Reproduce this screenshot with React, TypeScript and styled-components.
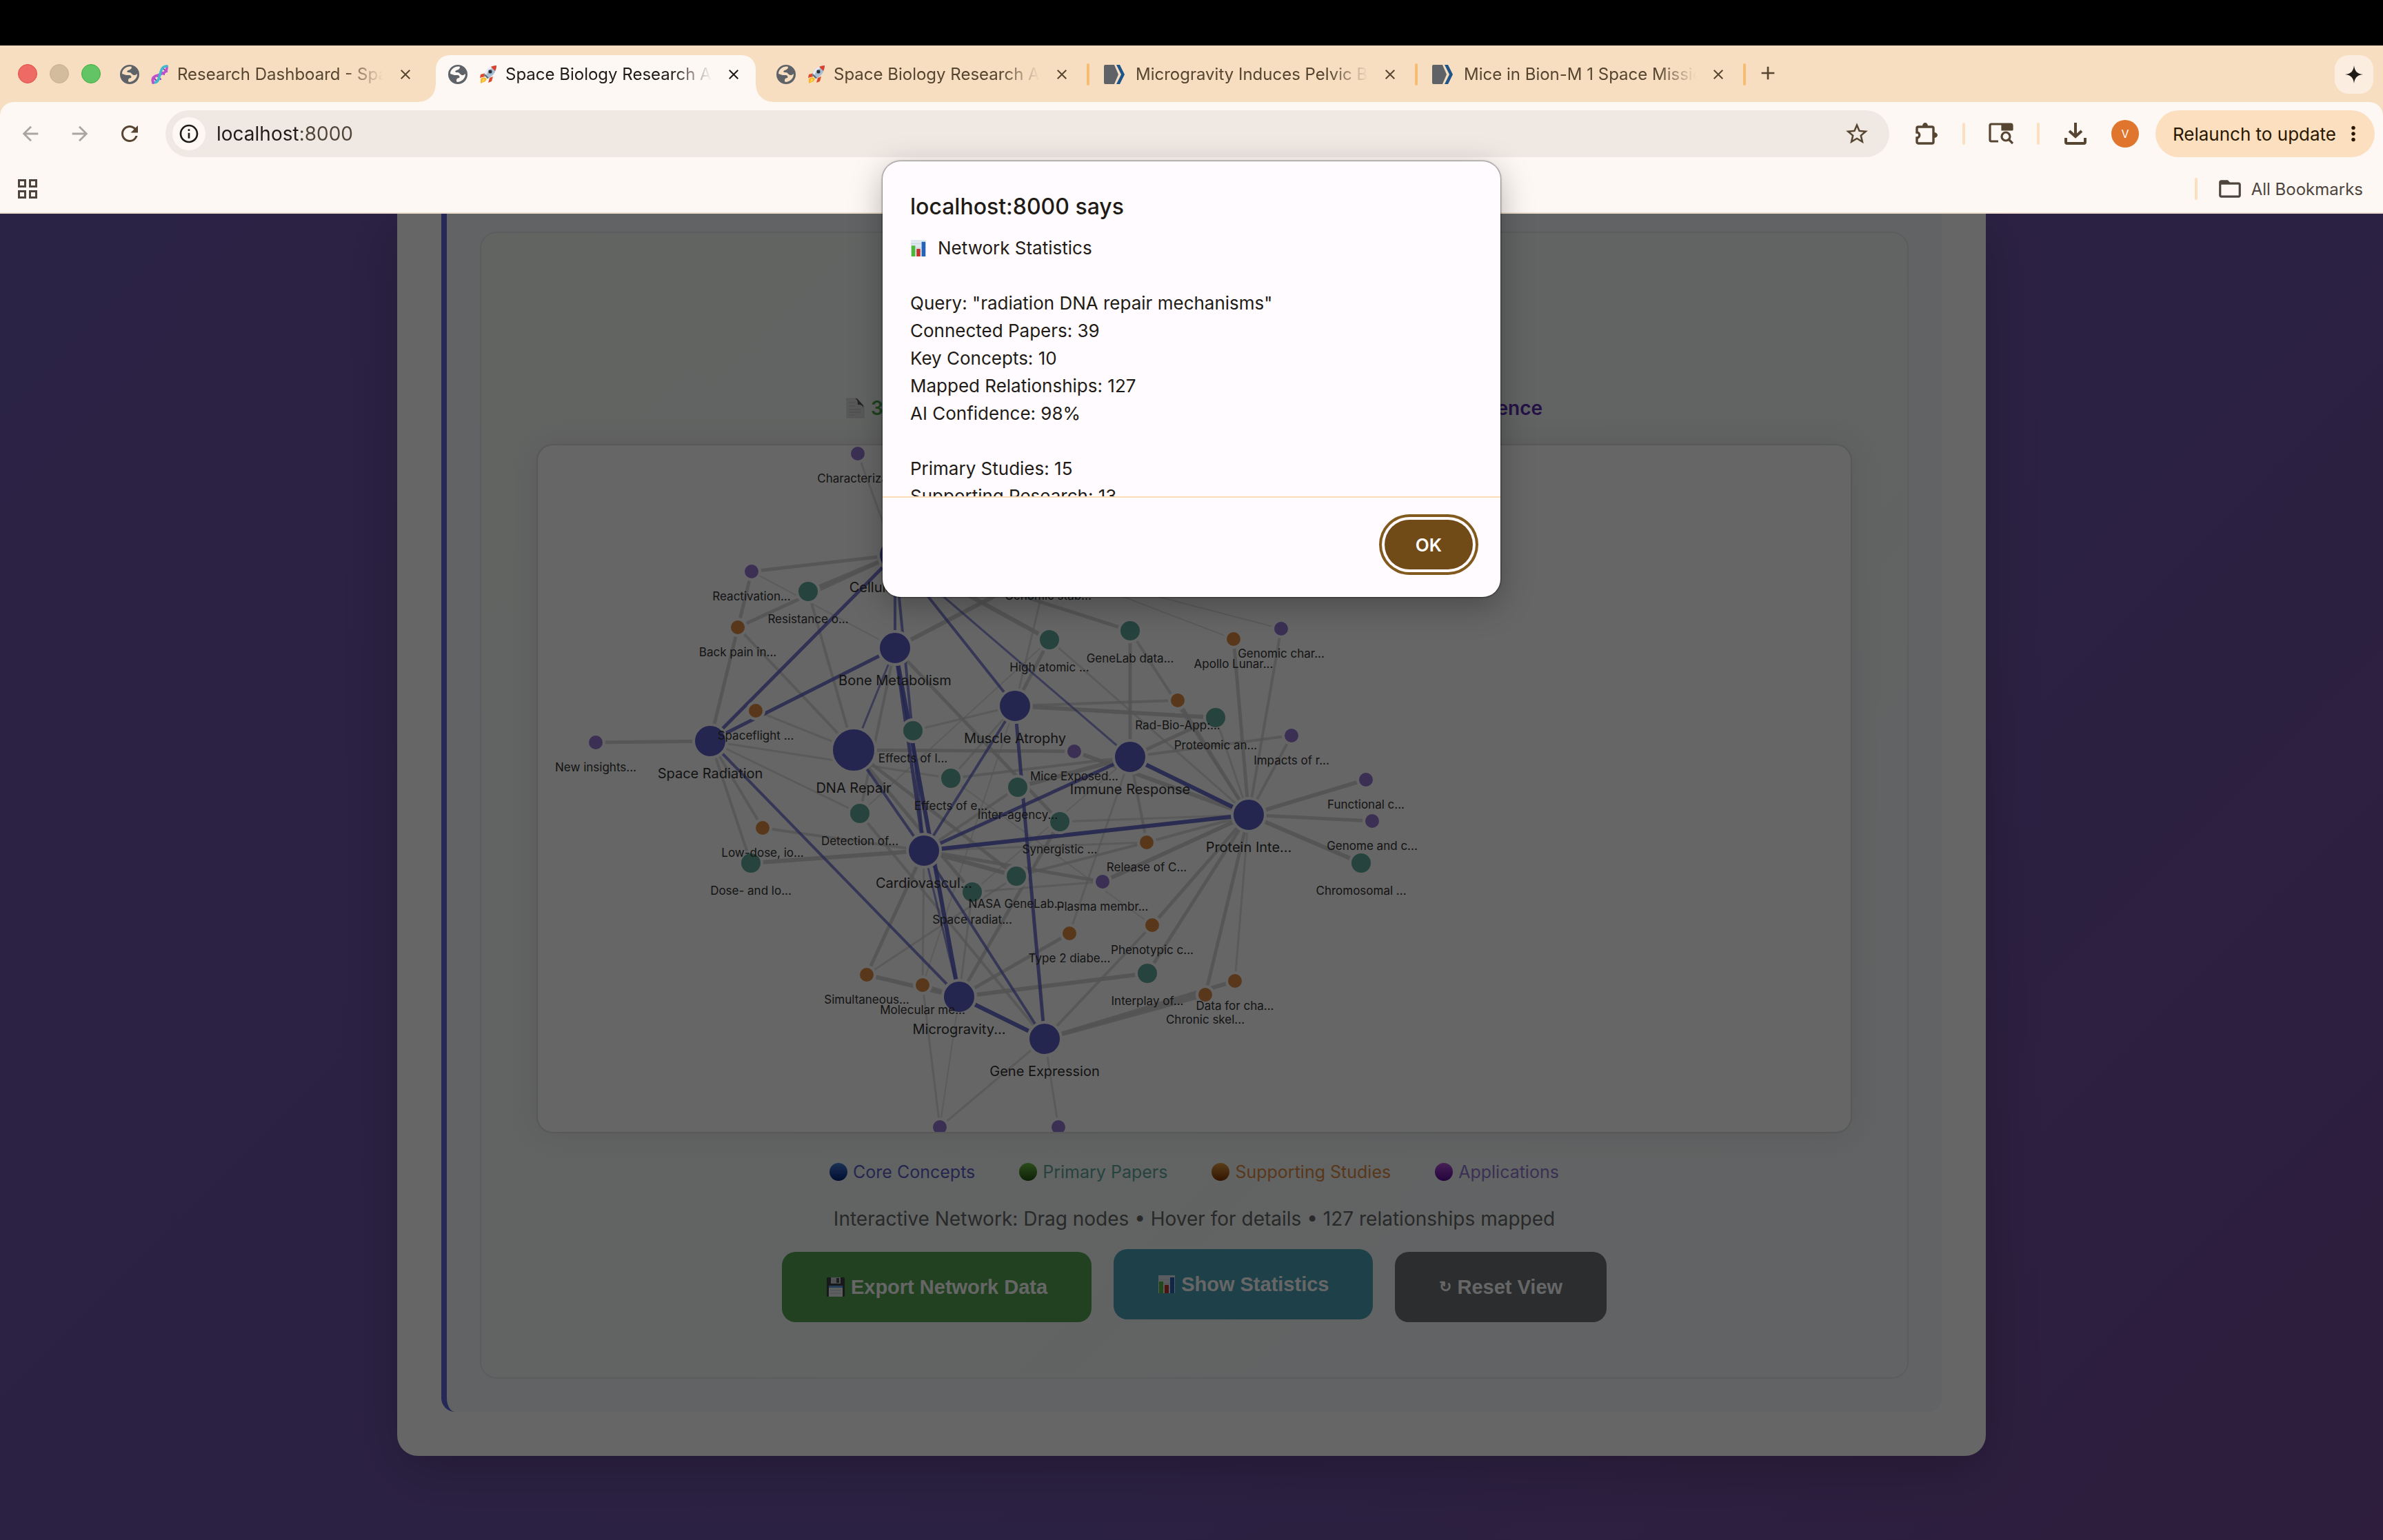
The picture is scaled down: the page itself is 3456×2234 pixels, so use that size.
import React from "react";
import styled, { createGlobalStyle } from "styled-components";
import {
  MdAdd,
  MdArrowBack,
  MdArrowForward,
  MdClose,
  MdFolderOpen,
  MdInfoOutline,
  MdMoreVert,
  MdRefresh,
  MdStarOutline,
} from "react-icons/md";

const UI = `Inter, "Liberation Sans", sans-serif`;

const GlobalStyle = createGlobalStyle`
  *, *::before, *::after { box-sizing: border-box; }
  body { margin: 0; background: #000; font-family: ${UI}; }
  button, input { font: inherit; }
  button { border: 0; padding: 0; background: none; color: inherit; cursor: pointer; }
  h1, h2, h3, p { margin: 0; }
  svg { display: block; flex: none; }
`;

/* ---------- browser frame ---------- */

const Screen = styled.div`
  position: relative;
  display: flex;
  flex-direction: column;
  height: 100vh;
  padding-top: 66px;
  overflow: hidden;
`;

const TabStrip = styled.header`
  display: flex;
  align-items: flex-end;
  flex: none;
  height: 82px;
  padding: 0 14px 0 26px;
  background: #f7dec0;
`;

const Lights = styled.div`
  display: flex;
  gap: 18px;
  width: 130px;
  padding-bottom: 27px;
`;

const Light = styled.button<{ $fill: string; $edge: string }>`
  width: 28px;
  height: 28px;
  border-radius: 50%;
  background: ${(p) => p.$fill};
  border: 1px solid ${(p) => p.$edge};
`;

const Tabs = styled.nav`
  display: flex;
  flex: 1;
  min-width: 0;
`;

const Tab = styled.div<{ $active?: boolean }>`
  position: relative;
  display: flex;
  align-items: center;
  width: 464px;
  height: 68px;
  padding: 0 20px 12px 17px;
  border-radius: 20px 20px 0 0;
  color: ${(p) => (p.$active ? "#1f1b16" : "#564531")};
  background: ${(p) => (p.$active ? "#fef8f4" : "transparent")};

  &::before,
  &::after {
    content: "";
    display: ${(p) => (p.$active ? "block" : "none")};
    position: absolute;
    bottom: 0;
    width: 24px;
    height: 24px;
  }
  &::before {
    right: 100%;
    background: radial-gradient(circle at 0 0, transparent 23px, #fef8f4 24px);
  }
  &::after {
    left: 100%;
    background: radial-gradient(circle at 100% 0, transparent 23px, #fef8f4 24px);
  }
`;

const TabTitle = styled.a`
  display: flex;
  align-items: center;
  gap: 12px;
  flex: 1;
  min-width: 0;
  margin: 0 20px 0 16px;
  overflow: hidden;
  color: inherit;
  font-size: 24px;
  line-height: 32px;
  text-decoration: none;
  white-space: nowrap;
  mask-image: linear-gradient(90deg, #000 calc(100% - 56px), transparent);
`;

const CloseButton = styled.button`
  display: grid;
  place-items: center;
  width: 24px;
  height: 24px;
`;

const Divider = styled.span<{ $color: string; $space?: number }>`
  flex: none;
  width: 4px;
  height: 32px;
  margin: 0 ${(p) => p.$space ?? 4}px;
  border-radius: 2px;
  background: ${(p) => p.$color};
`;

const TabGap = styled.div`
  display: flex;
  padding-top: 12px;
  width: 12px;
`;

const NewTab = styled.button`
  display: grid;
  place-items: center;
  width: 40px;
  height: 40px;
  margin: 6px 0 0 8px;
  color: #564531;
`;

const SparkButton = styled.button`
  display: grid;
  place-items: center;
  width: 56px;
  height: 56px;
  margin-bottom: 12px;
  border-radius: 20px;
  background: #fbeee1;
`;

const Chrome = styled.div`
  flex: none;
  background: #f7dec0;
`;

const ChromeBody = styled.div`
  border-radius: 20px 20px 0 0;
  border-bottom: 2px solid #eee0d0;
  background: #fef8f4;
`;

const Toolbar = styled.div`
  display: flex;
  align-items: center;
  height: 92px;
  padding: 0 12px 0 24px;
  color: #564531;
`;

const NavButtons = styled.div`
  display: flex;
  gap: 32px;
  width: 216px;
`;

const IconButton = styled.button<{ $muted?: boolean }>`
  display: grid;
  place-items: center;
  width: 40px;
  height: 40px;
  color: ${(p) => (p.$muted ? "#aaa5a0" : "inherit")};
`;

const AddressBar = styled.label`
  display: flex;
  align-items: center;
  flex: 1;
  height: 68px;
  padding: 0 28px 0 10px;
  border-radius: 34px;
  background: #f0e8e3;
`;

const SiteInfo = styled.span`
  display: grid;
  place-items: center;
  width: 48px;
  height: 48px;
  border-radius: 50%;
  color: #1f1b16;
  background: #fef8f4;
`;

const Address = styled.input`
  flex: 1;
  min-width: 0;
  height: 40px;
  margin-left: 16px;
  padding: 0;
  border: 0;
  outline: 0;
  color: #1f1b16;
  font-size: 28px;
  background: linear-gradient(90deg, #1f1b16 118px, #51453a 118px);
  background-clip: text;
  -webkit-text-fill-color: transparent;
`;

const Actions = styled.div`
  display: flex;
  align-items: center;
  padding-left: 34px;
`;

const Avatar = styled.button`
  width: 40px;
  height: 40px;
  margin: 0 24px 0 32px;
  border-radius: 50%;
  background: #e0752d;
  color: #fff;
  font-size: 16px;
  line-height: 40px;
`;

const Relaunch = styled.button`
  display: flex;
  align-items: center;
  gap: 8px;
  height: 68px;
  padding: 0 14px 0 25px;
  border-radius: 34px;
  background: #fbdfbf;
  color: #291800;
  font-size: 26px;
  white-space: nowrap;
`;

const BookmarkBar = styled.div`
  display: flex;
  align-items: center;
  justify-content: space-between;
  height: 68px;
  padding: 0 29px 0 26px;
  color: #4d453d;
`;

const AllBookmarks = styled.button`
  display: flex;
  align-items: center;
  gap: 12px;
  font-size: 24px;
`;

/* ---------- page ---------- */

const Page = styled.main`
  position: relative;
  flex: 1;
  padding: 0 64px;
  overflow: hidden;
  background: linear-gradient(135deg, #6d57ac, #6d53a6 65%, #744a99);
`;

const Backdrop = styled.div`
  position: absolute;
  inset: 0;
  background: rgba(0, 0, 0, 0.6);
`;

const Sheet = styled.div`
  max-width: 2304px;
  margin: 0 auto;
  padding: 0 64px 64px;
  border-radius: 0 0 30px 30px;
  background: #fff;
  box-shadow: 0 20px 80px rgba(0, 0, 0, 0.2);
`;

const Result = styled.section`
  padding: 26px 48px 48px;
  border-left: 8px solid #6065d8;
  border-radius: 0 0 20px 20px;
  background: #f5f7fd;
`;

const Panel = styled.div`
  padding: 80px;
  border: 2px solid #e2e7ea;
  border-radius: 24px;
  background: linear-gradient(135deg, #f5faf6, #f3f8fa);
  text-align: center;
`;

const QueryLine = styled.h2`
  margin-top: 80px;
  color: #5b5fc7;
  font-size: 36px;
  font-weight: 700;
  line-height: 40px;
`;

const Facts = styled.div`
  display: flex;
  justify-content: space-between;
  max-width: 1010px;
  margin: 34px auto 32px;
  font-size: 28px;
  font-weight: 600;
  line-height: 40px;
`;

const Fact = styled.span<{ $color: string }>`
  display: flex;
  align-items: center;
  gap: 8px;
  color: ${(p) => p.$color};
`;

const GraphBox = styled.figure`
  height: 1000px;
  margin: 0;
  overflow: hidden;
  border: 2px solid #dcdcdc;
  border-radius: 24px;
  background: #fff;
  box-shadow: 0 0 40px rgba(90, 40, 60, 0.12);
`;

const GraphSvg = styled.svg`
  width: 100%;
  height: 100%;
  font-family: ${UI};
`;

const Legend = styled.ul`
  display: flex;
  justify-content: center;
  gap: 64px;
  margin: 36px 0 0;
  padding: 0;
  list-style: none;
  font-size: 25px;
  line-height: 40px;
`;

const LegendItem = styled.li<{ $color: string }>`
  display: flex;
  align-items: center;
  gap: 8px;
  color: ${(p) => p.$color};
`;

const Ball = styled.span<{ $top: string; $bottom: string }>`
  width: 26px;
  height: 26px;
  border-radius: 50%;
  background: linear-gradient(${(p) => p.$top}, ${(p) => p.$bottom});
`;

const Note = styled.p`
  margin-top: 28px;
  color: #666;
  font-size: 28px;
  line-height: 40px;
`;

const ButtonRow = styled.div`
  display: flex;
  justify-content: center;
  gap: 32px;
  margin-top: 28px;
`;

const ActionButton = styled.button<{ $fill: string; $raised?: boolean }>`
  display: flex;
  align-items: center;
  gap: 8px;
  height: 102px;
  padding: 0 64px;
  border-radius: 20px;
  background: ${(p) => p.$fill};
  color: #fff;
  font-family: "Liberation Sans", Arial, sans-serif;
  font-size: 29px;
  font-weight: 700;
  transform: translateY(${(p) => (p.$raised ? -4 : 0)}px);
`;

const Turn = styled.span`
  font-size: 22px;
`;

/* ---------- alert ---------- */

const Alert = styled.div`
  position: absolute;
  top: 234px;
  left: 50%;
  width: 896px;
  transform: translateX(-50%);
  overflow: hidden;
  border-radius: 26px;
  background: #fffbff;
  box-shadow: 0 0 2px 1px rgba(0, 0, 0, 0.45), 0 12px 48px rgba(0, 0, 0, 0.28);
  color: #1f1b16;
`;

const AlertTitle = styled.h1`
  padding: 46px 40px 0;
  font-size: 32px;
  font-weight: 500;
  line-height: 40px;
`;

const AlertBody = styled.div`
  height: 402px;
  padding: 20px 40px 0;
  overflow: hidden;
  border-bottom: 2px solid #fadcb9;
  font-size: 26px;
  line-height: 40px;
`;

const AlertLine = styled.p`
  display: flex;
  align-items: center;
  gap: 16px;
  min-height: 40px;
`;

const AlertFooter = styled.div`
  display: flex;
  justify-content: flex-end;
  padding: 32px 40px 40px;
`;

const OkButton = styled.button`
  width: 128px;
  height: 72px;
  border-radius: 36px;
  background: #704b18;
  box-shadow: 0 0 0 4px #fffbff, 0 0 0 8px #835a1e;
  color: #fff;
  font-size: 26px;
  font-weight: 600;
`;

/* ---------- pictograms ---------- */

const Globe = () => (
  <svg width="28" height="28" viewBox="0 0 28 28">
    <path
      fill="#5f6368"
      fillRule="evenodd"
      d="M14 0a14 14 0 1 1 0 28 14 14 0 0 1 0-28zM3 13c2 1 4 1 6 2h4c3 0 4 2 3 4-2 0-4 1-4 3s0 3 2 3c6-1 11-5 11-12-2 2-5 3-7 1s-2-3-5-3-4-2-1-3 5-2 5-5c-6-2-14 3-14 10z"
    />
  </svg>
);

const Dna = () => (
  <svg width="26" height="28" viewBox="0 0 26 28" fill="none" strokeLinecap="round">
    <path d="M4 19l5 5M8 15l6 6M14 9l5 5M17 5l6 5" stroke="#7a3fb8" strokeWidth="2" />
    <path d="M3 26C1 16 8 16 13 14S24 11 23 2" stroke="#c04fd0" strokeWidth="3.600" />
    <path d="M3 26c8 0 8-5 10-12S16 2 23 2" stroke="#3fb9cf" strokeWidth="3.600" />
    <path d="M3 26C1 20 3 18 7 16" stroke="#c04fd0" strokeWidth="3.600" />
  </svg>
);

const Rocket = () => (
  <svg width="26" height="28" viewBox="0 0 26 28">
    <path d="M7 18l-5 2 0 7 7-3 2-4z" fill="#f8b72c" />
    <path d="M6 20l-2 5 4-3z" fill="#fbe36a" />
    <path d="M9 12l-7 2-1 5 7-2zM15 19l-2 7 5-2 2-7z" fill="#e0492c" />
    <path d="M25 1C16 1 10 6 7 15l5 5c8-3 13-10 13-19z" fill="#a9c0d4" />
    <path d="M25 1C16 1 10 6 7 15l2 2C12 9 18 4 25 1z" fill="#e9eff4" />
    <path d="M25 1c-4 0-6 1-8 2l6 6c1-2 2-5 2-8z" fill="#d8402c" />
    <path d="M7 15l5 5 2-1-6-6z" fill="#5d6c79" />
    <circle cx="16" cy="10" r="3" fill="#2b2f38" stroke="#8fa3b4" />
  </svg>
);

const BarChart = ({ size = 26 }: { size?: number }) => (
  <svg width={size} height={size} viewBox="0 0 26 26">
    <rect x="1" y="0" width="24" height="26" fill="#dfe8ee" />
    <path d="M1 6h24M1 12h24M1 18h24" stroke="#c5d2db" />
    <rect x="2" y="9" width="6" height="17" fill="#4fb63c" />
    <rect x="10" y="14" width="6" height="12" fill="#c3312a" />
    <rect x="18" y="3" width="6" height="23" fill="#2463b8" />
  </svg>
);

const Sheetlet = () => (
  <svg width="28" height="32" viewBox="0 0 28 32">
    <path d="M1 2h14l11 11v17H1z" fill="#dedede" stroke="#d0d0d0" />
    <path d="M4 8h8M4 13h9M4 18h18M4 22h18M4 26h8" stroke="#bdbdbd" />
    <path d="M13 2c4 1 4 6 4 9 3 0 7 0 8 5V12L16 2z" fill="#5a5a5a" />
  </svg>
);

const Floppy = () => (
  <svg width="28" height="30" viewBox="0 0 28 30">
    <path d="M2 1h24l1 1v26l-1 1H2l-1-1V2z" fill="#3c3f45" />
    <rect x="7" y="1" width="14" height="9" fill="#c9ccd0" />
    <rect x="15" y="2" width="4" height="7" fill="#4b4f55" />
    <rect x="4" y="13" width="20" height="16" fill="#e8edf2" />
    <rect x="4" y="13" width="20" height="3" fill="#5b9bd8" />
    <path d="M6 20h16M6 24h16" stroke="#c2c9d0" />
  </svg>
);

const JournalMark = () => (
  <svg width="30" height="28" viewBox="0 0 30 28">
    <path d="M2 0h13l6 14-6 14H2a2 2 0 0 1-2-2V2a2 2 0 0 1 2-2z" fill="#5f6368" />
    <path d="M18 0h5l7 14-7 14h-5l7-14z" fill="#20558a" />
  </svg>
);

const Spark = () => (
  <svg width="28" height="28" viewBox="0 0 28 28">
    <path d="M14 1c1 8 4 12 13 13-9 1-12 5-13 13-1-8-4-12-13-13 9-1 12-5 13-13z" fill="#1f1b16" />
  </svg>
);

const Puzzle = () => (
  <svg width="32" height="32" viewBox="0 0 32 32">
    <path
      d="M2 14V8a2 2 0 0 1 2-2h20a2 2 0 0 1 2 2v20a2 2 0 0 1-2 2H4a2 2 0 0 1-2-2v-6c5 0 5-8 0-8z"
      fill="none"
      stroke="currentColor"
      strokeWidth="3.400"
    />
    <path d="M10 5a4 5 0 0 1 8 0zM27 14a5 4 0 0 1 0 8z" fill="currentColor" />
  </svg>
);

const TabSearch = () => (
  <svg width="36" height="32" viewBox="0 0 36 32" fill="none" stroke="currentColor" strokeWidth="3.200">
    <path d="M14 27H4a2 2 0 0 1-2-2V4a2 2 0 0 1 2-2h28a2 2 0 0 1 2 2v7" />
    <path d="M20 3h13v7H20z" fill="currentColor" />
    <circle cx="25" cy="20" r="6" />
    <path d="M29 24l6 6" />
  </svg>
);

const Download = () => (
  <svg width="32" height="32" viewBox="0 0 32 32" fill="none" stroke="currentColor" strokeWidth="4">
    <path d="M16 0v20" />
    <path d="M7 12l9 8 9-8" />
    <path d="M2 22v6a2 2 0 0 0 2 2h24a2 2 0 0 0 2-2v-6" />
  </svg>
);

const Grid = () => (
  <svg width="28" height="28" viewBox="0 0 28 28" fill="none" stroke="currentColor" strokeWidth="3">
    <path d="M1.500 1.500h9v9h-9zM17.500 1.500h9v9h-9zM1.500 17.500h9v9h-9zM17.500 17.500h9v9h-9z" />
  </svg>
);

/* ---------- network data ---------- */

type Kind = "core" | "primary" | "support" | "application";
type NetNode = { id: string; kind: Kind; x: number; y: number; label: string; r?: number };

const n = (id: string, kind: Kind, x: number, y: number, label: string, r?: number): NetNode => ({ id, kind, x, y, label, r });

const nodes: NetNode[] = [
  n("A1", "application", 1244, 657, "Characteriza..."),
  n("A2", "application", 1090, 828, "Reactivation..."),
  n("A3", "application", 864, 1076, "New insights..."),
  n("A4", "application", 1558, 1089, "Mice Exposed..."),
  n("A5", "application", 1858, 911, "Genomic char..."),
  n("A6", "application", 1873, 1066, "Impacts of r..."),
  n("A7", "application", 1981, 1130, "Functional c..."),
  n("A8", "application", 1990, 1190, "Genome and c..."),
  n("A9", "application", 1599, 1278, "Plasma membr..."),
  n("A10", "application", 1363, 1634, ""),
  n("A11", "application", 1535, 1634, ""),
  n("S1", "support", 1070, 909, "Back pain in..."),
  n("S2", "support", 1096, 1030, "Spaceflight ..."),
  n("S3", "support", 1106, 1200, "Low-dose, io..."),
  n("S4", "support", 1789, 926, "Apollo Lunar..."),
  n("S5", "support", 1708, 1015, "Rad-Bio-App:..."),
  n("S6", "support", 1663, 1221, "Release of C..."),
  n("S7", "support", 1671, 1341, "Phenotypic c..."),
  n("S8", "support", 1551, 1353, "Type 2 diabe..."),
  n("S9", "support", 1257, 1413, "Simultaneous..."),
  n("S10", "support", 1338, 1428, "Molecular me..."),
  n("S11", "support", 1791, 1422, "Data for cha..."),
  n("S12", "support", 1748, 1442, "Chronic skel..."),
  n("P1", "primary", 1172, 857, "Resistance o..."),
  n("P2", "primary", 1522, 927, "High atomic ..."),
  n("P3", "primary", 1639, 914, "GeneLab data..."),
  n("P4", "primary", 1763, 1040, "Proteomic an..."),
  n("P5", "primary", 1324, 1059, "Effects of l..."),
  n("P6", "primary", 1379, 1128, "Effects of e..."),
  n("P7", "primary", 1476, 1141, "Inter-agency..."),
  n("P8", "primary", 1247, 1179, "Detection of..."),
  n("P9", "primary", 1089, 1251, "Dose- and lo..."),
  n("P10", "primary", 1537, 1191, "Synergistic ..."),
  n("P11", "primary", 1474, 1270, "NASA GeneLab..."),
  n("P12", "primary", 1410, 1293, "Space radiat..."),
  n("P13", "primary", 1664, 1411, "Interplay of..."),
  n("P14", "primary", 1974, 1251, "Chromosomal ..."),
  n("P15", "primary", 1520, 823, "Genomic stab..."),
  n("C1", "core", 1030, 1074, "Space Radiation"),
  n("C2", "core", 1238, 1087, "DNA Repair", 32),
  n("C3", "core", 1298, 939, "Bone Metabolism"),
  n("C4", "core", 1298, 804, "Cellular Stre..."),
  n("C5", "core", 1472, 1023, "Muscle Atrophy"),
  n("C6", "core", 1639, 1097, "Immune Response"),
  n("C7", "core", 1811, 1181, "Protein Inte..."),
  n("C8", "core", 1340, 1233, "Cardiovascul..."),
  n("C9", "core", 1391, 1445, "Microgravity..."),
  n("C10", "core", 1515, 1506, "Gene Expression"),
];

const kinds: Record<Kind, { r: number; fill: string; drop: number; size: number }> = {
  core: { r: 24, fill: "#5c5fc8", drop: 30, size: 20 },
  primary: { r: 16, fill: "#5fa89c", drop: 30, size: 17 },
  support: { r: 12, fill: "#de8a41", drop: 30, size: 17 },
  application: { r: 12, fill: "#9478d2", drop: 30, size: 17 },
};

/* "from-to:weight" */
const conceptLinks =
  "C4-C1:5 C4-C3:4 C4-C8:4 C4-C5:4 C4-C6:3 C1-C3:5 C1-C9:4 C3-C2:3 C3-C8:5 C3-C9:6 C2-C8:4 C5-C8:4 C5-C10:5 C6-C8:5 C6-C7:6 C7-C8:6 C8-C9:3 C8-C10:4 C9-C10:6";

const paperLinks =
  "A1-C4:3 A2-C4:5 A2-C1:5 S1-C4:5 P1-C4:6 A2-C3:2 P1-C2:4 S1-C2:4 A3-C1:5 S2-C2:3 P6-C1:3 P8-C1:3 S3-C1:4 P9-C1:4 S3-C8:4 P9-C8:6 " +
  "A4-C2:5 A4-C7:6 P8-C3:4 P10-C3:5 P15-C3:6 P15-C5:3 P2-C4:6 P3-C4:5 P8-P2:2 P2-C7:3 P2-C5:5 P3-C6:5 P3-C7:4 S5-C7:5 S5-C5:4 P4-C5:6 " +
  "P4-C6:5 P4-C7:3 S4-C7:5 A5-C7:4 A6-C6:4 A6-C7:4 A7-C7:6 A8-C7:5 P14-C7:6 P7-C6:6 P6-C6:4 P5-C5:3 P6-C5:3 S10-C5:2 P12-C6:2 S8-C6:3 " +
  "S6-C6:4 P10-C7:3 P10-C9:5 P7-C8:4 S6-C7:4 S6-C8:3 S6-P11:4 P11-S9:3 A9-C7:6 A9-C8:5 S7-P6:2 A9-P12:3 P11-C8:6 P11-C2:5 P12-C2:5 " +
  "P8-C10:4 S9-C8:5 S10-C8:3 P12-C9:3 S8-C9:5 P13-C9:6 S9-C9:6 S10-C9:5 S10-A10:3 C9-A10:2 C10-A10:3 C10-A11:3 S7-C10:4 S7-C7:5 " +
  "P13-C7:5 S11-C10:6 S12-C10:6 S12-C7:5 S11-C7:3 S4-P15:2 A5-P15:2";

const byId = new Map(nodes.map((node) => [node.id, node]));

const parseLinks = (source: string) =>
  source.split(" ").map((entry) => {
    const [pair, weight] = entry.split(":");
    const [from, to] = pair.split("-");
    return { key: pair, a: byId.get(from)!, b: byId.get(to)!, weight: Number(weight) };
  });

const Links = ({ source, color }: { source: string; color: string }) => (
  <g stroke={color}>
    {parseLinks(source).map(({ key, a, b, weight }) => (
      <line key={key} x1={a.x} y1={a.y} x2={b.x} y2={b.y} strokeWidth={weight} strokeOpacity={0.4 + weight / 12} />
    ))}
  </g>
);

const Network = () => (
  <GraphSvg viewBox="780 645 1904 996" role="img" aria-label="Knowledge network">
    <Links source={paperLinks} color="#cfcfcf" />
    <Links source={conceptLinks} color="#5c5fc8" />
    <g stroke="#fff" strokeWidth="4">
      {nodes.map((node) => (
        <circle key={node.id} cx={node.x} cy={node.y} r={node.r ?? kinds[node.kind].r} fill={kinds[node.kind].fill} />
      ))}
    </g>
    <g fill="#333" textAnchor="middle">
      {nodes.map((node) => (
        <text
          key={node.id}
          x={node.x}
          y={node.y + (node.r ?? kinds[node.kind].r) + kinds[node.kind].drop}
          fontSize={kinds[node.kind].size}
        >
          {node.label}
        </text>
      ))}
    </g>
  </GraphSvg>
);

/* ---------- content ---------- */

const tabs = [
  { icon: "globe", emoji: <Dna />, title: "Research Dashboard - Space Biology" },
  { icon: "globe", emoji: <Rocket />, title: "Space Biology Research Assistant", active: true },
  { icon: "globe", emoji: <Rocket />, title: "Space Biology Research Assistant" },
  { icon: "journal", title: "Microgravity Induces Pelvic Bone Loss" },
  { icon: "journal", title: "Mice in Bion-M 1 Space Mission" },
];

const Favicon = styled.span`
  display: grid;
  place-items: center;
  flex: none;
  width: 30px;
  height: 30px;
`;

const statistics = [
  "",
  'Query: "radiation DNA repair mechanisms"',
  "Connected Papers: 39",
  "Key Concepts: 10",
  "Mapped Relationships: 127",
  "AI Confidence: 98%",
  "",
  "Primary Studies: 15",
  "Supporting Research: 13",
];

export default function App() {
  return (
    <Screen>
      <GlobalStyle />
      <TabStrip>
        <Lights>
          <Light $fill="#ee6a65" $edge="#e24b41" aria-label="Close window" />
          <Light $fill="#d3bb9d" $edge="#c9b08f" aria-label="Minimise window" />
          <Light $fill="#63c466" $edge="#3fae3c" aria-label="Zoom window" />
        </Lights>
        <Tabs>
          {tabs.map((tab, i) => (
            <React.Fragment key={i}>
              <Tab $active={tab.active}>
                <Favicon>{tab.icon === "globe" ? <Globe /> : <JournalMark />}</Favicon>
                <TabTitle href="#">
                  {tab.emoji}
                  {tab.title}
                </TabTitle>
                <CloseButton aria-label="Close tab">
                  <MdClose size={24} />
                </CloseButton>
              </Tab>
              <TabGap>
                <Divider $color={i < 2 ? "transparent" : "#f5bd74"} />
              </TabGap>
            </React.Fragment>
          ))}
          <NewTab aria-label="New tab">
            <MdAdd size={32} />
          </NewTab>
        </Tabs>
        <SparkButton aria-label="Assistant">
          <Spark />
        </SparkButton>
      </TabStrip>

      <Chrome>
        <ChromeBody>
          <Toolbar>
            <NavButtons>
              <IconButton $muted aria-label="Back">
                <MdArrowBack size={34} />
              </IconButton>
              <IconButton $muted aria-label="Forward">
                <MdArrowForward size={34} />
              </IconButton>
              <IconButton aria-label="Reload">
                <MdRefresh size={36} />
              </IconButton>
            </NavButtons>
            <AddressBar>
              <SiteInfo>
                <MdInfoOutline size={32} />
              </SiteInfo>
              <Address aria-label="Address" defaultValue="localhost:8000" />
              <MdStarOutline size={38} />
            </AddressBar>
            <Actions>
              <IconButton aria-label="Extensions">
                <Puzzle />
              </IconButton>
              <Divider $color="#fbdfbf" $space={32} />
              <IconButton aria-label="Search tabs">
                <TabSearch />
              </IconButton>
              <Divider $color="#fbdfbf" $space={32} />
              <IconButton aria-label="Downloads">
                <Download />
              </IconButton>
              <Avatar aria-label="Profile">V</Avatar>
              <Relaunch>
                Relaunch to update
                <MdMoreVert size={34} />
              </Relaunch>
            </Actions>
          </Toolbar>
          <BookmarkBar>
            <Grid />
            <AllBookmarks>
              <Divider $color="#fbdfbf" $space={16} />
              <MdFolderOpen size={38} />
              All Bookmarks
            </AllBookmarks>
          </BookmarkBar>
        </ChromeBody>
      </Chrome>

      <Page>
        <Sheet>
          <Result>
            <Panel>
              <QueryLine>Network for: "radiation DNA repair mechanisms"</QueryLine>
              <Facts>
                <Fact $color="#4da651">
                  <Sheetlet />
                  39 Papers
                </Fact>
                <Fact $color="#5b2fb0">98% AI Confidence</Fact>
              </Facts>
              <GraphBox>
                <Network />
              </GraphBox>
              <Legend>
                <LegendItem $color="#5c5fc8">
                  <Ball $top="#3f7fd8" $bottom="#001e78" />
                  Core Concepts
                </LegendItem>
                <LegendItem $color="#5fa89c">
                  <Ball $top="#6fc044" $bottom="#235010" />
                  Primary Papers
                </LegendItem>
                <LegendItem $color="#de8a41">
                  <Ball $top="#e09a40" $bottom="#803400" />
                  Supporting Studies
                </LegendItem>
                <LegendItem $color="#9478d2">
                  <Ball $top="#b050d8" $bottom="#5a0a96" />
                  Applications
                </LegendItem>
              </Legend>
              <Note>Interactive Network: Drag nodes • Hover for details • 127 relationships mapped</Note>
              <ButtonRow>
                <ActionButton $fill="#54a353">
                  <Floppy />
                  Export Network Data
                </ActionButton>
                <ActionButton $fill="#4da0b6" $raised>
                  <BarChart />
                  Show Statistics
                </ActionButton>
                <ActionButton $fill="#6b7075">
                  <Turn>↻</Turn>
                  Reset View
                </ActionButton>
              </ButtonRow>
            </Panel>
          </Result>
        </Sheet>
        <Backdrop />
      </Page>

      <Alert role="alertdialog" aria-labelledby="alert-title">
        <AlertTitle id="alert-title">localhost:8000 says</AlertTitle>
        <AlertBody>
          <AlertLine>
            <BarChart size={24} />
            Network Statistics
          </AlertLine>
          {statistics.map((line, i) => (
            <AlertLine key={i}>{line}</AlertLine>
          ))}
        </AlertBody>
        <AlertFooter>
          <OkButton>OK</OkButton>
        </AlertFooter>
      </Alert>
    </Screen>
  );
}
